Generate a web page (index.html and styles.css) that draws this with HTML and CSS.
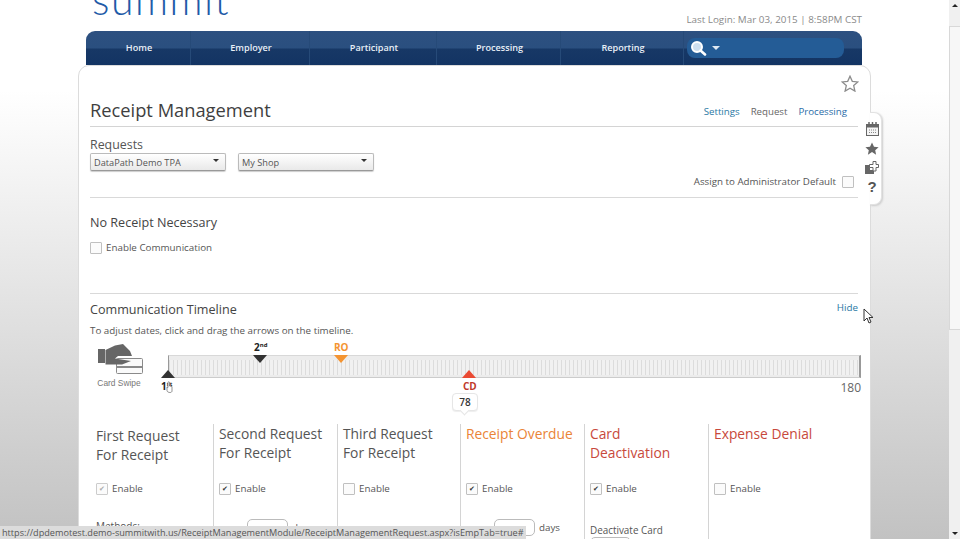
FILE: index.html
```html
<!DOCTYPE html>
<html lang="en">
<head>
<meta charset="utf-8">
<title>Receipt Management</title>
<link rel="stylesheet" href="styles.css">
</head>
<body>
<div class="viewport">
  <div class="page">
    <header class="top">
      <div class="logo">summit</div>
      <div class="login">Last Login: Mar 03, 2015 | 8:58PM CST</div>
    </header>
    <nav class="nav">
      <a class="nav-item w-home">Home</a>
      <a class="nav-item w-emp">Employer</a>
      <a class="nav-item w-part">Participant</a>
      <a class="nav-item w-proc">Processing</a>
      <a class="nav-item w-rep">Reporting</a>
      <div class="search">
        <svg class="search-icon" width="17" height="16" viewBox="0 0 17 16"><circle cx="7" cy="7" r="5" fill="#cfe0f0" stroke="#fff" stroke-width="2"/><path d="M10.500 10.500 15 14.500" stroke="#fff" stroke-width="2.600" stroke-linecap="round"/></svg>
        <span class="search-caret"></span>
      </div>
    </nav>
    <main class="card">
      <div class="star-row">
        <svg width="18" height="17" viewBox="0 0 18 17"><path d="M9 1.200l2.300 5.100 5.500.6-4.100 3.700 1.200 5.500L9 13.300l-4.900 2.800 1.200-5.500L1.200 6.900l5.500-.6z" fill="#fff" stroke="#8c8c8c" stroke-width="1.300"/></svg>
      </div>
      <div class="title-row">
        <h1>Receipt Management</h1>
        <div class="tabs"><a class="link">Settings</a><span>Request</span><a class="link2">Processing</a></div>
      </div>
      <section class="requests">
        <div class="req-label">Requests</div>
        <div class="selects">
          <div class="select">DataPath Demo TPA</div>
          <div class="select">My Shop</div>
        </div>
        <div class="assign">Assign to Administrator Default <span class="check"></span></div>
      </section>
      <section class="no-receipt">
        <h2>No Receipt Necessary</h2>
        <label class="enable-comm"><span class="check"></span>Enable Communication</label>
      </section>
      <section class="timeline-sec">
        <div class="tl-head"><h2>Communication Timeline</h2><a class="link hide">Hide</a></div>
        <p class="hint">To adjust dates, click and drag the arrows on the timeline.</p>
        <div class="timeline">
          <div class="swipe">
            <svg width="46" height="30" viewBox="0 0 46 30"><rect x="19.500" y="14.500" width="26" height="15" rx="1" fill="#fafafa" stroke="#8a8a8a"/><rect x="20" y="22" width="25" height="2" fill="#8a8a8a"/><path d="M1 5h7v14H1z" fill="#666"/><path d="M8.500 6 18 1.500 26 0l7 7 2 5H21l-3 2.500 16 2.500-9 3.500H8.500z" fill="#666"/></svg>
            <div>Card Swipe</div>
          </div>
          <div class="track"></div>
          <div class="mark m2">2<sup>nd</sup></div>
          <div class="tri down dark m2t"></div>
          <div class="mark mro">RO</div>
          <div class="tri down orange mrot"></div>
          <div class="tri up dark m1t"></div>
          <div class="mark m1">1<sup>st</sup></div>
          <svg class="hand" width="7" height="12" viewBox="0 0 7 12"><path d="M2 1.500c0-1 1.500-1 1.500 0V5l2.500.5V10c0 1-1 1.500-2 1.500S1 11 1 9.500V6l1 .5z" fill="#fff" stroke="#666" stroke-width=".7"/></svg>
          <div class="tri up red mcdt"></div>
          <div class="mark mcd">CD</div>
          <div class="bubble">78</div>
          <div class="end">180</div>
        </div>
        <div class="cols">
          <div class="col first">
            <h3>First Request<br>For Receipt</h3>
            <label class="en"><span class="check on dim">&#10004;</span>Enable</label>
            <div class="cut">Methods:</div>
          </div>
          <div class="col">
            <h3>Second Request<br>For Receipt</h3>
            <label class="en"><span class="check on">&#10004;</span>Enable</label>
            <div class="days"><span class="in"></span> days</div>
          </div>
          <div class="col">
            <h3>Third Request<br>For Receipt</h3>
            <label class="en"><span class="check"></span>Enable</label>
          </div>
          <div class="col">
            <h3 class="orange-t">Receipt Overdue<br>&nbsp;</h3>
            <label class="en"><span class="check on">&#10004;</span>Enable</label>
            <div class="days"><span class="in"></span> days</div>
          </div>
          <div class="col">
            <h3 class="red-t">Card<br>Deactivation</h3>
            <label class="en"><span class="check on">&#10004;</span>Enable</label>
            <div class="deact">Deactivate Card</div>
            <span class="in small"></span>
          </div>
          <div class="col">
            <h3 class="red-t">Expense Denial<br>&nbsp;</h3>
            <label class="en"><span class="check"></span>Enable</label>
          </div>
        </div>
      </section>
      <aside class="side">
        <svg width="13" height="14" viewBox="0 0 13 14"><rect x=".5" y="2.500" width="12" height="11" fill="#f4f4f4" stroke="#666"/><rect y="2" width="13" height="3.500" fill="#666"/><path d="M3 0v3M6.500 0v3M10 0v3" stroke="#666" stroke-width="1.500"/><path d="M3 8h7M3 10.500h7" stroke="#888" stroke-dasharray="1 1"/></svg>
        <svg width="14" height="13" viewBox="0 0 14 13"><path d="M7 .5l2 4.200 4.600.5-3.400 3.100.9 4.500L7 10.100l-4.100 2.700.9-4.500L.4 5.200 5 4.700z" fill="#666"/></svg>
        <svg width="14" height="13" viewBox="0 0 14 13"><path d="M0 4h5v5h4v4H0z" fill="#666"/><path d="M8 .5h3v3h2.500v3H11v3.500H8V6.500H4.500v-3H8z" fill="#fff" stroke="#666"/></svg>
        <span class="q">?</span>
      </aside>
    </main>
    <svg class="cursor" width="11" height="16" viewBox="0 0 11 16"><path d="M1 1v12l3-3 2 5 2-1-2-4.500h4z" fill="#fff" stroke="#333"/></svg>
  </div>
  <div class="scrollbar">
    <div class="sb-btn"><span class="sb-up"></span></div>
    <div class="sb-track"><div class="sb-thumb"></div></div>
    <div class="sb-btn"><span class="sb-down"></span></div>
  </div>
  <div class="status">https://dpdemotest.demo-summitwith.us/ReceiptManagementModule/ReceiptManagementRequest.aspx?isEmpTab=true#</div>
</div>
</body>
</html>
```
FILE: styles.css
```css
* { box-sizing: border-box; }
html, body { margin: 0; height: 100%; overflow: hidden; }
body { font-family: "Open Sans", "Noto Sans", sans-serif; color: #444; background: #fff; }
.viewport { position: relative; width: 960px; height: 539px; display: flex; overflow: hidden; }
.page { position: relative; flex: 1; height: 539px; overflow: hidden; background: linear-gradient(180deg, #fff 0, #fff 90px, #f2f2f2 190px, #c2c2c2 539px); }

.top { height: 31px; display: flex; justify-content: space-between; padding: 0 87px 0 92px; position: relative; background: #fff; }
.logo { font-family: "Lato", sans-serif; font-weight: 300; font-size: 41px; line-height: 30px; height: 31px; color: #1f5ba8; letter-spacing: 1.500px; overflow: hidden; margin-top: -15px; }
.login { font-size: 9.850px; color: #8a8a8a; line-height: 14px; margin-top: 12px; margin-left: auto; }

.nav { display: flex; height: 34px; margin: 0 87px 0 86px; border-radius: 9px 9px 0 0; background: linear-gradient(180deg, #2d5080 0, #2a4f7f 50%, #173866 53%, #133463 100%); align-items: stretch; }
.nav-item { display: flex; align-items: center; justify-content: center; color: #e8eff7; font-size: 9.100px; font-weight: 600; border-right: 1px solid #264a78; padding: 0 0 1px 2px; }
.w-home { width: 105px; }
.w-emp { width: 119px; }
.w-part { width: 127px; }
.w-proc { width: 124px; }
.w-rep { width: 123px; }
.search { width: 157px; height: 20px; margin: 7px 0 0 3px; border-radius: 8px; background: #245c96; display: flex; align-items: center; padding-left: 3px; }
.search-caret { width: 0; height: 0; border: 4px solid transparent; border-top-color: #dfe9f3; border-bottom: 0; margin-left: 5px; }

.card { position: relative; margin: 0 0 0 78px; width: 793px; height: 520px; background: #fff; border: 1px solid #dcdcdc; border-radius: 11px 11px 0 0; padding: 0 12px 0 11px; z-index: 1; }
.star-row { height: 31px; display: flex; justify-content: flex-end; padding-top: 9px; margin-right: -1px; }
.title-row { height: 30px; display: flex; align-items: flex-end; justify-content: space-between; border-bottom: 1px solid #d4d4d4; padding-bottom: 4px; }
h1 { margin: 0; font-size: 18.300px; font-weight: 400; color: #3f3f3f; line-height: 24px; }
.tabs { display: flex; gap: 11px; font-size: 9.700px; color: #666; padding-right: 11px; line-height: 16px; padding-bottom: 2px; }
.link { color: #2a78a4; }
.link2 { color: #2b6ca8; }

.requests { height: 71px; border-bottom: 1px solid #d9d9d9; position: relative; }
.req-label { font-size: 12.400px; line-height: 16px; padding-top: 10px; height: 26px; color: #555; }
.selects { display: flex; gap: 12px; }
.select { position: relative; width: 136px; height: 18px; border: 1px solid #bbb; border-bottom-color: #999; border-radius: 2px; background: linear-gradient(#fff, #e9e9e9); font-size: 9.200px; line-height: 17px; padding-left: 3px; color: #555; box-shadow: 0 1px 1px #ccc; }
.select::after { content: ""; position: absolute; right: 6px; top: 5px; border: 3.500px solid transparent; border-top-color: #333; border-bottom: 0; }
.assign { display: flex; align-items: center; justify-content: flex-end; gap: 6px; font-size: 9.750px; line-height: 14px; margin-top: 4px; padding-right: 4px; color: #555; }
.check { display: inline-flex; align-items: center; justify-content: center; width: 12px; height: 12px; border: 1px solid #c0c0c0; border-radius: 1px; background: #fbfbfb; font-size: 7px; line-height: 1; color: #333; flex: none; font-family: "DejaVu Sans", sans-serif; }
.check.dim { color: #aaa; border-color: #ccc; }

.no-receipt { height: 96px; border-bottom: 1px solid #d9d9d9; }
h2 { margin: 0; font-size: 12.600px; font-weight: 400; line-height: 16px; color: #444; }
.no-receipt h2 { padding-top: 17px; height: 33px; }
.enable-comm { display: flex; align-items: center; gap: 4px; font-size: 9.800px; margin-top: 10px; line-height: 14px; color: #555; }

.tl-head { display: flex; justify-content: space-between; align-items: flex-start; padding-top: 8px; height: 28px; }
.hide { font-size: 9.800px; line-height: 14px; margin-top: -1px; }
.hint { margin: 2px 0 0; font-size: 9.800px; line-height: 14px; color: #555; }
.timeline { position: relative; height: 80px; margin-top: 6px; }
.swipe { position: absolute; left: 6px; top: 0; width: 46px; text-align: center; font-size: 8.400px; color: #777; font-family: "Liberation Sans", sans-serif; white-space: nowrap; line-height: 10px; }
.swipe svg { display: block; margin-left: 1px; }
.swipe div { margin-top: 4px; }
.track { position: absolute; left: 78px; top: 11px; width: 693px; height: 23px; background: repeating-linear-gradient(90deg, #dcdcdc 0 1px, #f1f1f1 1px 4px) 0 4px / 100% 15px no-repeat, #ececec; border-left: 1px solid #999; border-right: 2px solid #999; border-top: 1px solid #d8d8d8; border-bottom: 1px solid #ccc; }
.tri { position: absolute; width: 0; height: 0; border-left: 7.500px solid transparent; border-right: 7.500px solid transparent; }
.down { border-top: 8px solid; }
.up { border-bottom: 8px solid; }
.dark { border-top-color: #333; border-bottom-color: #333; }
.orange { border-top-color: #f49431; }
.red { border-bottom-color: #ea4a33; }
.m2t { left: 163px; top: 11px; }
.mrot { left: 244px; top: 11px; }
.m1t { left: 71px; top: 26px; }
.mcdt { left: 372px; top: 26px; }
.mark { position: absolute; font-size: 10px; font-weight: 700; line-height: 12px; color: #222; }
.mark sup { font-size: 6px; line-height: 0; vertical-align: 4px; }
.m2 { left: 164px; top: -3px; }
.mro { left: 244px; top: -3px; color: #f49431; }
.m1 { left: 71px; top: 36px; }
.hand { position: absolute; left: 76px; top: 37px; }
.mcd { left: 373px; top: 36px; color: #c0392b; }
.bubble { position: absolute; left: 362px; top: 49px; width: 26px; height: 18px; border: 1px solid #e6e6e6; border-radius: 4px; background: #fff; font-size: 10px; font-weight: 600; text-align: center; line-height: 16px; color: #333; box-shadow: 0 1px 1px #eee; }
.bubble::after { content: ""; position: absolute; left: 8px; bottom: -4px; width: 6px; height: 6px; background: #fff; border-right: 1px solid #e6e6e6; border-bottom: 1px solid #e6e6e6; transform: rotate(45deg); }
.end { position: absolute; right: -3px; top: 37px; font-size: 12px; line-height: 14px; color: #666; }

.cols { display: grid; grid-template-columns: 123px 124px 123px 124px 124px 1fr; height: 116px; }
.col { padding-left: 5px; border-left: 1px solid #d4d4d4; height: 116px; overflow: hidden; }
.col.first { border-left: 0; padding: 2px 0 0 6px; }
h3 { margin: 0; font-size: 13.800px; font-weight: 400; line-height: 19px; color: #555; height: 46px; }
.orange-t { color: #ea8437; }
.red-t { color: #c8493c; }
.en { display: flex; align-items: center; gap: 4px; font-size: 9.800px; line-height: 14px; margin-top: 12px; color: #555; }
.first .en { margin-top: 10px; }
.cut { margin-top: 23px; font-size: 10px; color: #555; line-height: 14px; }
.days { display: flex; align-items: center; gap: 4px; margin: 23px 0 0 28px; font-size: 9.800px; line-height: 16px; color: #555; }
.in { display: inline-block; width: 41px; height: 17px; border: 1px solid #bbb; border-radius: 5px; background: #fff; flex: none; }
.deact { font-size: 9.900px; margin-top: 27px; line-height: 14px; color: #555; }
.small { display: block; margin-top: 0; }

.side { position: absolute; left: 783px; top: 46px; width: 20px; height: 93px; display: flex; flex-direction: column; align-items: center; gap: 6px; padding-top: 10px; z-index: 2; }
.side::before { content: ""; position: absolute; z-index: -1; left: 8px; right: 0; top: 0; bottom: 0; background: #fff; border: 1px solid #e2e2e2; border-left: 0; border-radius: 0 8px 8px 0; box-shadow: 1px 1px 2px #ccc; }
.q { font-size: 15px; font-weight: 800; line-height: 13px; color: #555; font-family: "Liberation Sans", sans-serif; }

.cursor { position: absolute; left: 863px; top: 308px; z-index: 3; }

.scrollbar { width: 11px; flex: none; height: 539px; display: flex; flex-direction: column; background: #f0f0f0; }
.sb-btn { height: 11px; display: flex; align-items: center; justify-content: center; background: #f0f0f0; }
.sb-up { border: 3.500px solid transparent; border-bottom-color: #222; border-top: 0; }
.sb-down { border: 3.500px solid transparent; border-top-color: #222; border-bottom: 0; }
.sb-track { flex: 1; padding-top: 15px; }
.sb-thumb { height: 304px; background: #f7f7f7; border: 1px solid #d8d8d8; border-right: 0; }

.status { position: absolute; left: 0; bottom: 0; width: 526px; height: 13px; background: #dcdcdc; font-size: 9.150px; line-height: 13px; color: #555; padding-left: 2px; white-space: nowrap; overflow: hidden; z-index: 5; }
```
